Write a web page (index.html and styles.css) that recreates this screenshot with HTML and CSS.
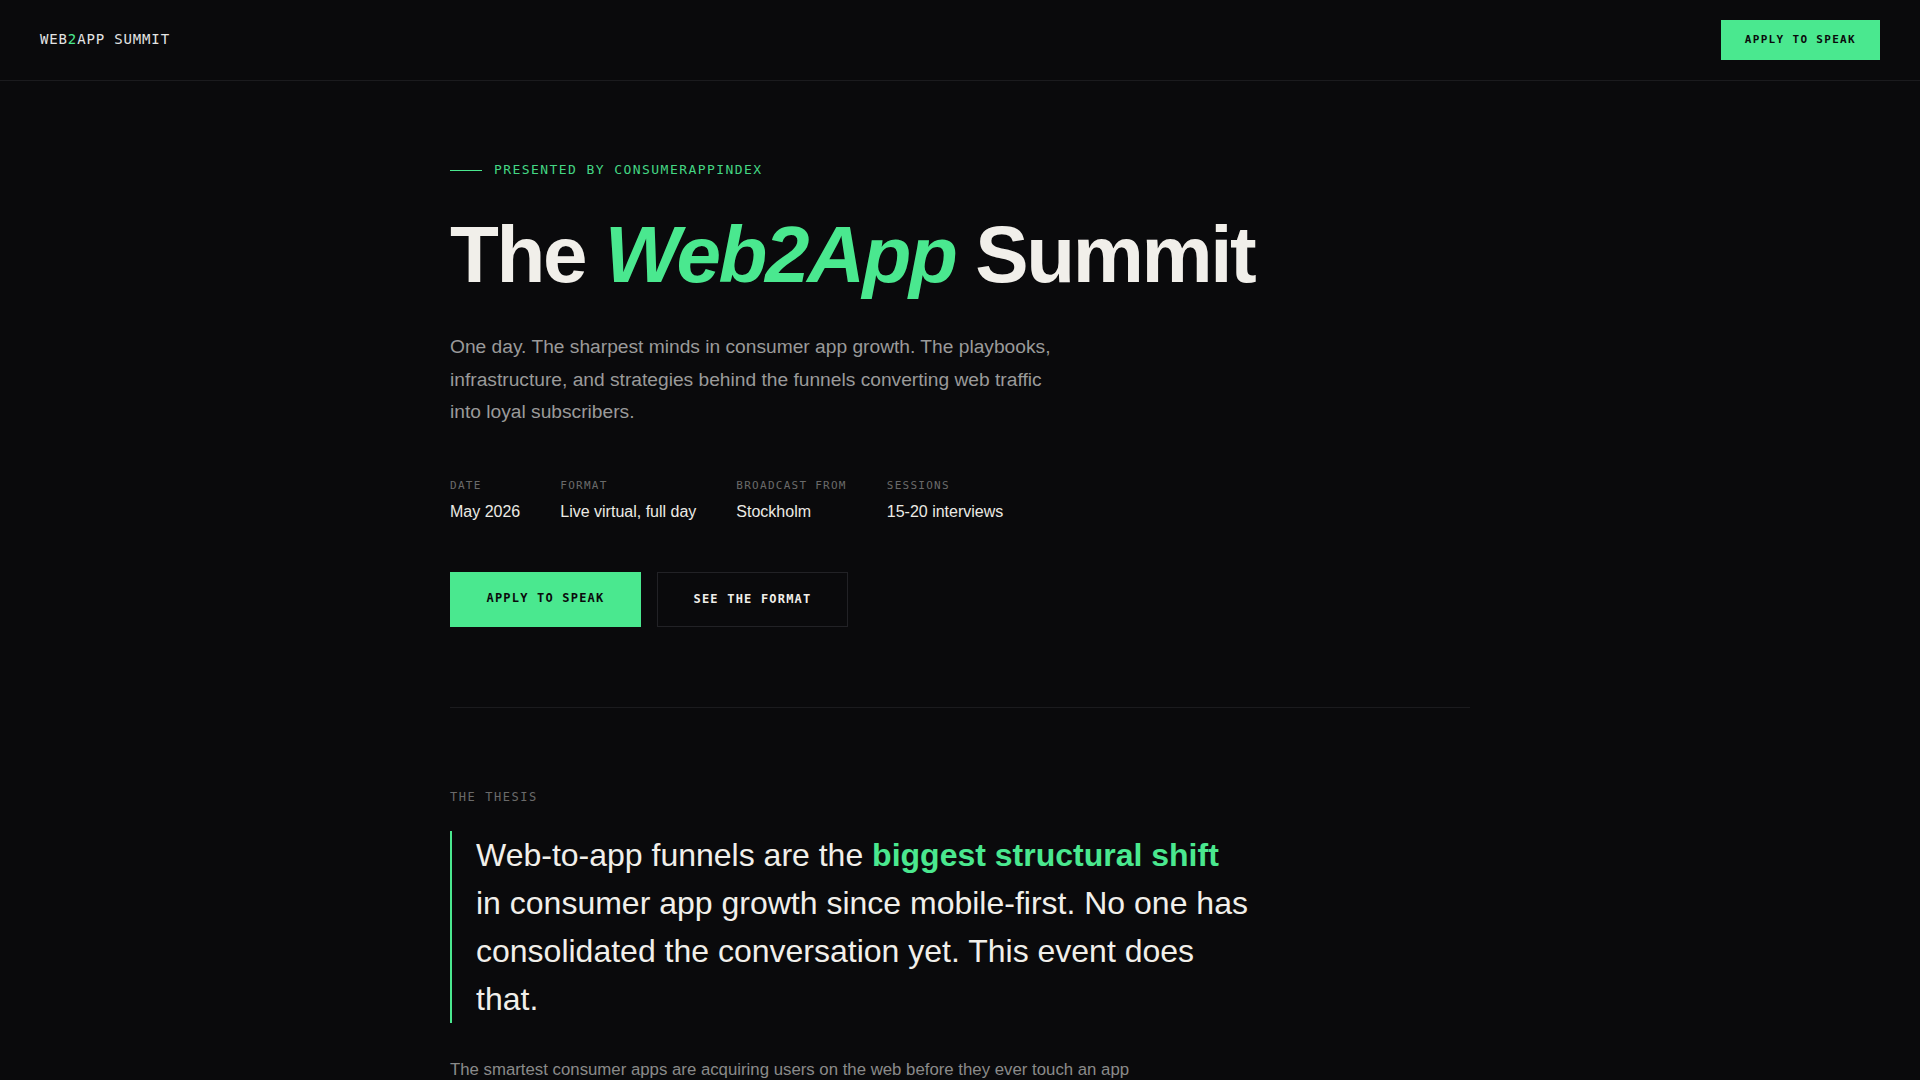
FILE: index.html
```html
<!DOCTYPE html>
<html lang="en">
<head>
<meta charset="utf-8">
<title>Web2App Summit</title>
<link rel="stylesheet" href="styles.css">
</head>
<body>
<header class="nav">
  <div class="logo">WEB<span class="accent">2</span>APP SUMMIT</div>
  <a class="nav-btn" href="#apply">APPLY TO SPEAK</a>
</header>
<main class="container">
  <section class="hero">
    <div class="eyebrow"><span class="eyebrow-line"></span>PRESENTED BY CONSUMERAPPINDEX</div>
    <h1 class="title">The <em>Web2App</em> Summit</h1>
    <p class="lead">One day. The sharpest minds in consumer app growth. The playbooks, infrastructure, and strategies behind the funnels converting web traffic into loyal subscribers.</p>
    <div class="meta">
      <div class="meta-item"><div class="meta-label">DATE</div><div class="meta-value">May 2026</div></div>
      <div class="meta-item"><div class="meta-label">FORMAT</div><div class="meta-value">Live virtual, full day</div></div>
      <div class="meta-item"><div class="meta-label">BROADCAST FROM</div><div class="meta-value">Stockholm</div></div>
      <div class="meta-item"><div class="meta-label">SESSIONS</div><div class="meta-value">15-20 interviews</div></div>
    </div>
    <div class="actions">
      <a class="btn btn-primary" href="#apply">APPLY TO SPEAK</a>
      <a class="btn btn-secondary" href="#format">SEE THE FORMAT</a>
    </div>
  </section>
  <section class="thesis">
    <div class="section-label">THE THESIS</div>
    <blockquote class="quote">Web-to-app funnels are the <strong>biggest structural shift</strong> in consumer app growth since mobile-first. No one has consolidated the conversation yet. This event does that.</blockquote>
    <p class="body-text">The smartest consumer apps are acquiring users on the web before they ever touch an app store. Quizzes, onboarding flows and paywalls on the web change the economics of growth.</p>
  </section>
</main>
</body>
</html>
```
FILE: styles.css
```css
* { box-sizing: border-box; }
html, body { margin: 0; padding: 0; }
body {
  background: #0a0a0c;
  color: #f0eee9;
  font-family: "Liberation Sans", Arial, sans-serif;
  overflow: hidden;
}
a { text-decoration: none; }

.nav {
  height: 81px;
  border-bottom: 1px solid #1b1b1e;
  display: flex;
  align-items: center;
  justify-content: space-between;
  padding: 0 40px;
}
.logo {
  font-family: "DejaVu Sans Mono", monospace;
  font-size: 14px;
  letter-spacing: 0.85px;
  color: #e4e4e4;
  margin-top: -2px;
}
.accent { color: #4ae88f; }
.nav-btn {
  background: #4ae88f;
  color: #0a0a0c;
  font-family: "DejaVu Sans Mono", monospace;
  font-weight: bold;
  font-size: 11px;
  letter-spacing: 0.12em;
  line-height: 14px;
  padding: 13px 24px;
  margin-top: -1px;
}

.container {
  width: 1020px;
  margin: 0 auto;
}
.hero {
  padding-top: 79px;
  padding-bottom: 80px;
  border-bottom: 1px solid #1b1b1e;
}
.eyebrow {
  display: flex;
  align-items: center;
  gap: 12px;
  font-family: "DejaVu Sans Mono", monospace;
  font-size: 13px;
  line-height: 20px;
  letter-spacing: 0.11em;
  color: #44d684;
}
.eyebrow-line {
  width: 32px;
  height: 1px;
  background: #4ae88f;
}
.title {
  margin: 31px 0 0;
  font-size: 80px;
  line-height: 88px;
  font-weight: bold;
  letter-spacing: -0.03em;
  color: #f1efea;
}
.title em {
  color: #4ae88f;
  font-style: italic;
}
.lead {
  margin: 32px 0 0;
  max-width: 620px;
  font-size: 19.2px;
  line-height: 1.7;
  color: #9a9a9a;
}
.meta {
  margin-top: 50px;
  display: flex;
  gap: 40px;
}
.meta-label {
  font-family: "DejaVu Sans Mono", monospace;
  font-size: 11px;
  line-height: 13px;
  letter-spacing: 0.115em;
  color: #6a6a6a;
  margin-bottom: 11px;
}
.meta-value {
  font-size: 16px;
  line-height: 18px;
  color: #eceae5;
}
.actions {
  margin-top: 51px;
  display: flex;
  gap: 16px;
}
.btn {
  display: block;
  width: 191px;
  height: 55px;
  line-height: 53px;
  text-align: center;
  font-family: "DejaVu Sans Mono", monospace;
  font-weight: bold;
  font-size: 12px;
  letter-spacing: 0.1em;
}
.btn-primary {
  background: #4ae88f;
  color: #0a0a0c;
  line-height: 51px;
  border: 1px solid #4ae88f;
}
.btn-secondary {
  border: 1px solid #222226;
  color: #f1efea;
}

.thesis {
  padding-top: 81px;
}
.section-label {
  font-family: "DejaVu Sans Mono", monospace;
  font-size: 12px;
  line-height: 16px;
  letter-spacing: 0.13em;
  color: #6a6a6a;
}
.quote {
  margin: 26px 0 0;
  max-width: 800px;
  border-left: 2px solid #4ae88f;
  padding-left: 24px;
  font-size: 32px;
  line-height: 48px;
  color: #f1efea;
}
.quote strong {
  color: #4ae88f;
  font-weight: bold;
}
.body-text {
  margin: 33px 0 0;
  max-width: 720px;
  font-size: 16.8px;
  line-height: 1.7;
  color: #8a8a8a;
}
```
